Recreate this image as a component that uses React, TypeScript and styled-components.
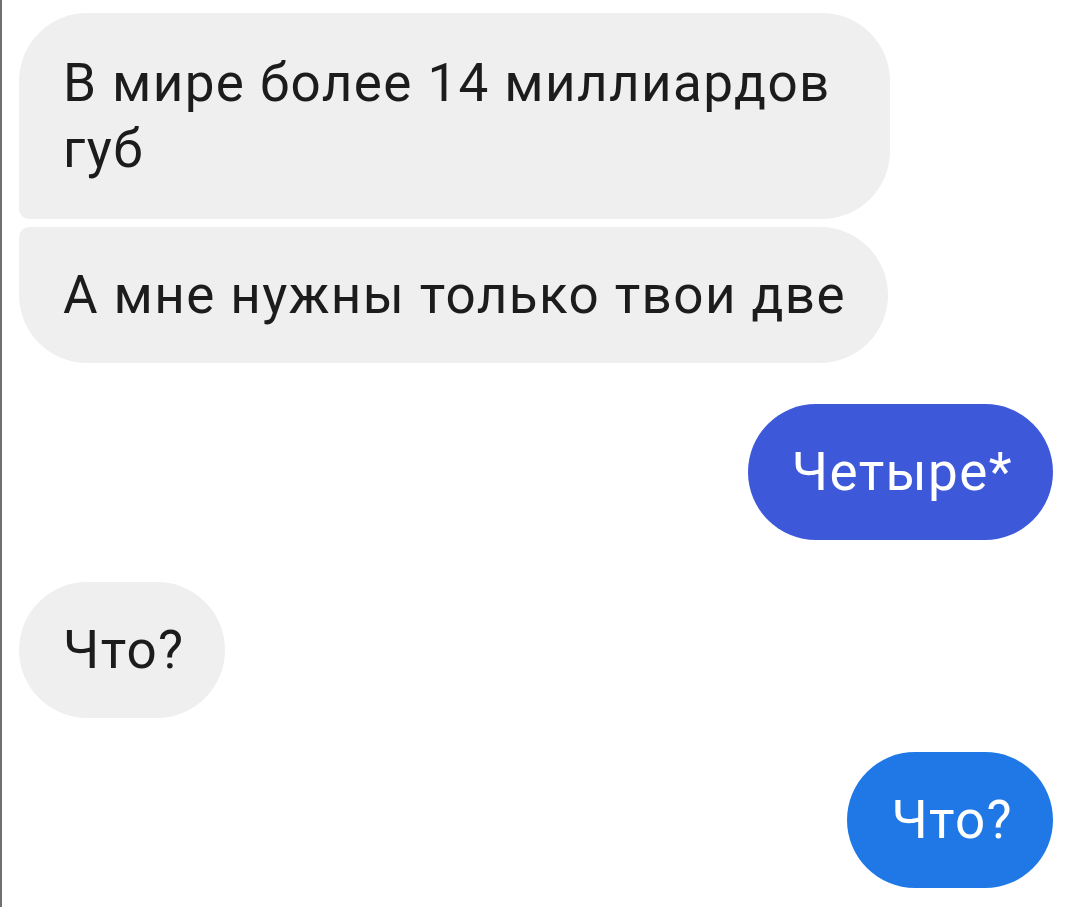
import React from "react";
import styled, { createGlobalStyle, css } from "styled-components";

const Global = createGlobalStyle`
  html, body { margin: 0; padding: 0; background: #ffffff; }
  body { font-family: Roboto, "Noto Sans", Arial, sans-serif; }
`;

const Screen = styled.div`
  width: 1080px;
  height: 907px;
  box-sizing: border-box;
  border-left: 2px solid #707070;
  padding: 13px 27px 0 17px;
  display: flex;
  flex-direction: column;
  overflow: hidden;
`;

const Group = styled.div<{ $gap: number }>`
  display: flex;
  flex-direction: column;
  gap: 8px;
  margin-top: ${(p) => p.$gap}px;
`;

type Corner = "first" | "last" | "single";

const Bubble = styled.div<{ $out?: boolean; $tone?: string; $pos?: Corner; $w?: number; $multi?: boolean }>`
  align-self: ${(p) => (p.$out ? "flex-end" : "flex-start")};
  box-sizing: border-box;
  ${(p) => (p.$w ? css`width: ${p.$w}px;` : "")}
  min-height: 136px;
  padding: ${(p) => (p.$multi ? "37px 40px 37px 44px" : "0 40px 0 44px")};
  display: flex;
  align-items: center;
  white-space: nowrap;
  font-family: Roboto, "Noto Sans", Arial, sans-serif;
  font-size: 53px;
  line-height: 66px;
  letter-spacing: 1.4px;
  color: ${(p) => (p.$out ? "#ffffff" : "#1c1c1c")};
  background: ${(p) => p.$tone ?? "#efefef"};
  border-radius: ${(p) =>
    p.$pos === "first"
      ? "68px 68px 68px 10px"
      : p.$pos === "last"
      ? "10px 68px 68px 68px"
      : "68px"};
`;

export default function App() {
  return (
    <>
      <Global />
      <Screen>
        <Group $gap={0}>
          <Bubble $pos="first" $w={871} $multi>
            <span>
              В мире более 14 миллиардов
              <br />
              губ
            </span>
          </Bubble>
          <Bubble $pos="last" $w={869}>А мне нужны только твои две</Bubble>
        </Group>
        <Group $gap={41}>
          <Bubble $out $tone="#3d59da">Четыре*</Bubble>
        </Group>
        <Group $gap={42}>
          <Bubble>Что?</Bubble>
        </Group>
        <Group $gap={34}>
          <Bubble $out $tone="#1f78e6">Что?</Bubble>
        </Group>
      </Screen>
    </>
  );
}
